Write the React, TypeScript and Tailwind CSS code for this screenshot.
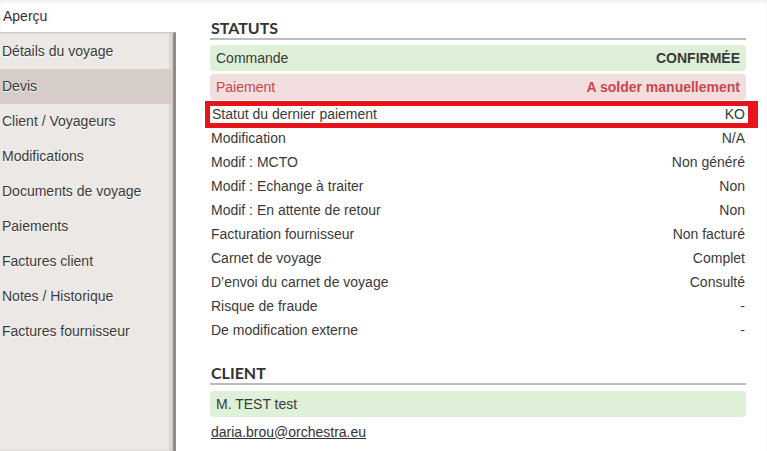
import React from 'react';

const navItems = [
  'Détails du voyage',
  'Devis',
  'Client / Voyageurs',
  'Modifications',
  'Documents de voyage',
  'Paiements',
  'Factures client',
  'Notes / Historique',
  'Factures fournisseur',
];

const statusRows: [string, string][] = [
  ['Modification', 'N/A'],
  ['Modif : MCTO', 'Non généré'],
  ['Modif : Echange à traiter', 'Non'],
  ['Modif : En attente de retour', 'Non'],
  ['Facturation fournisseur', 'Non facturé'],
  ['Carnet de voyage', 'Complet'],
  ['D’envoi du carnet de voyage', 'Consulté'],
  ['Risque de fraude', '-'],
  ['De modification externe', '-'],
];

const Heading: React.FC<{ children: React.ReactNode }> = ({ children }) => (
  <h2 className="h-[22px] border-b-2 border-[#bcbcbc] pl-px font-['Lato',sans-serif] text-[16px] font-bold leading-[20px] text-[#333]">
    {children}
  </h2>
);

export default function App() {
  return (
    <div className="flex h-[451px] w-[767px] overflow-hidden bg-white font-['Liberation_Sans',Arial,sans-serif] text-[14px] text-[#3a3a3a] shadow-[inset_0_2px_3px_rgba(0,0,0,0.07)]">
      {/* Sidebar */}
      <aside className="flex w-[176px] shrink-0 flex-col">
        <div className="flex h-[32px] items-center pl-[3px] text-[#333]">Aperçu</div>
        <nav className="flex-1 border-t border-r-[3px] border-t-[#cfcac6] border-r-[#8c8c8c] bg-[#ece8e5] pt-px shadow-[inset_-3px_0_3px_rgba(0,0,0,0.12)]">
          {navItems.map((item) => (
            <div
              key={item}
              className={`flex h-[35px] items-center pl-[2px] [text-shadow:0_1px_1px_#fff] ${
                item === 'Devis' ? 'bg-[#d6cdc8]' : ''
              }`}
            >
              {item}
            </div>
          ))}
        </nav>
      </aside>

      {/* Main */}
      <main className="ml-[34px] w-[536px] pt-[18px]">
        <Heading>STATUTS</Heading>

        <div className="mt-[5px] flex h-[26px] items-center justify-between rounded-[4px] bg-[#dff0d8] px-[6px]">
          <span>Commande</span>
          <span className="font-bold">CONFIRMÉE</span>
        </div>
        <div className="mt-[3px] flex h-[26px] items-center justify-between rounded-[4px] bg-[#f2dede] px-[6px] text-[#c9474b]">
          <span>Paiement</span>
          <span className="font-bold">A solder manuellement</span>
        </div>

        <div className="relative mt-[2px] flex h-[24px] items-center justify-between pl-[2px] pr-px">
          <span>Statut du dernier paiement</span>
          <span>KO</span>
          <div className="pointer-events-none absolute -top-[1px] -bottom-[2px] -left-[5px] -right-[12px] border-[5px] border-r-[10px] border-[#e8141c]" />
        </div>

        {statusRows.map(([label, value]) => (
          <div key={label} className="flex h-[24px] items-center justify-between pl-px pr-px">
            <span>{label}</span>
            <span>{value}</span>
          </div>
        ))}

        <div className="mt-[21px]">
          <Heading>CLIENT</Heading>
        </div>
        <div className="mt-[6px] flex h-[26px] items-center rounded-[4px] bg-[#dff0d8] px-[6px]">
          M. TEST test
        </div>
        <div className="mt-[3px] flex h-[24px] items-center pl-px">
          <a href="#" className="text-[#333] underline">
            daria.brou@orchestra.eu
          </a>
        </div>
      </main>
    </div>
  );
}
